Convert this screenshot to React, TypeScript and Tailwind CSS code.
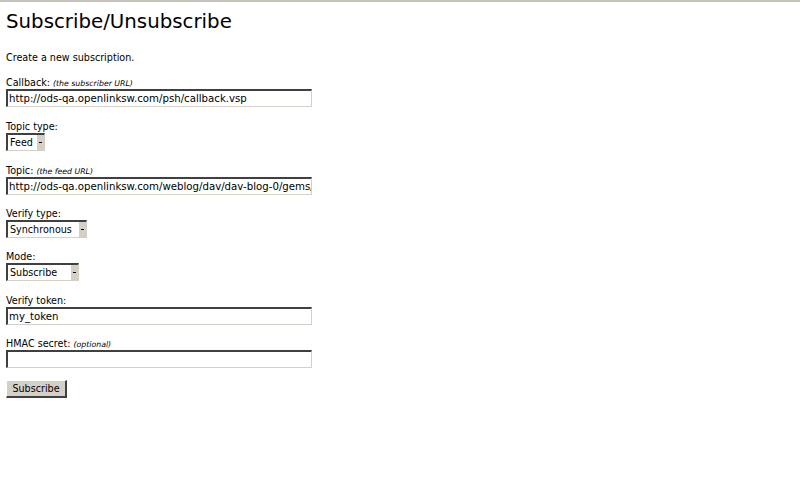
import React from "react";

const font = { fontFamily: '"DejaVu Sans", Verdana, sans-serif' };

function Label({ text, hint }: { text: string; hint?: string }) {
  return (
    <div className="text-[9.6px] leading-[13px] text-black h-[13px] whitespace-nowrap">
      {text}
      {hint && <em className="text-[7.8px] ml-[3px]">{hint}</em>}
    </div>
  );
}

function TextInput({ value }: { value: string }) {
  return (
    <div className="w-[306px] h-[18px] border-t-2 border-l-2 border-b border-r border-t-[#404040] border-l-[#404040] border-b-[#d4d0c8] border-r-[#d4d0c8] bg-white overflow-hidden whitespace-nowrap text-[10.2px] leading-[15px] pl-[1px] text-black">
      {value}
    </div>
  );
}

function Select({ value, width }: { value: string; width: number }) {
  return (
    <div
      className="h-[18px] flex border-t-2 border-l-2 border-b border-r border-t-[#404040] border-l-[#404040] border-b-[#d4d0c8] border-r-[#d4d0c8] bg-white text-[9.6px] leading-[15px] text-black"
      style={{ width }}
    >
      <div className="flex-1 pl-[2px] overflow-hidden whitespace-nowrap">{value}</div>
      <div className="w-[8px] h-full bg-[#d4d0c8] border-l border-white flex items-center justify-center">
        <div className="w-[3px] h-[1px] bg-black" />
      </div>
    </div>
  );
}

export default function App() {
  return (
    <div className="w-[800px] h-[500px] bg-white border-t-2 border-t-[#c8c4bc] overflow-hidden" style={font}>
      <div className="pl-[6px]">
        <h1 className="text-[19.8px] leading-[24px] pt-[8px] text-black font-normal">Subscribe/Unsubscribe</h1>
        <p className="text-[9.6px] leading-[12px] mt-[18px] text-black">Create a new subscription.</p>
        <div className="mt-[12px]">
          <Label text="Callback:" hint="(the subscriber URL)" />
          <TextInput value="http://ods-qa.openlinksw.com/psh/callback.vsp" />
        </div>
        <div className="mt-[13px]">
          <Label text="Topic type:" />
          <Select value="Feed" width={39} />
        </div>
        <div className="mt-[13px]">
          <Label text="Topic:" hint="(the feed URL)" />
          <TextInput value="http://ods-qa.openlinksw.com/weblog/dav/dav-blog-0/gems/atom.xml" />
        </div>
        <div className="mt-[12px]">
          <Label text="Verify type:" />
          <Select value="Synchronous" width={81} />
        </div>
        <div className="mt-[12px]">
          <Label text="Mode:" />
          <Select value="Subscribe" width={73} />
        </div>
        <div className="mt-[13px]">
          <Label text="Verify token:" />
          <TextInput value="my_token" />
        </div>
        <div className="mt-[12px]">
          <Label text="HMAC secret:" hint="(optional)" />
          <TextInput value="" />
        </div>
        <div className="mt-[12px] flex">
          <button className="w-[61px] h-[18px] bg-[#d4d0c8] border-t border-l border-b-2 border-r-2 border-t-white border-l-white border-b-[#404040] border-r-[#404040] text-[9.6px] leading-[14px] text-black p-0">
            Subscribe
          </button>
        </div>
      </div>
    </div>
  );
}
